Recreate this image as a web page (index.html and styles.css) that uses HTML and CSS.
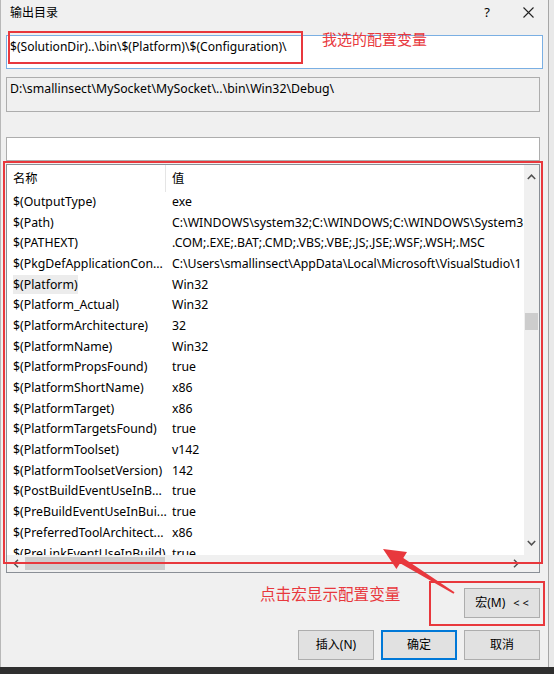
FILE: index.html
```html
<!DOCTYPE html>
<html lang="zh-CN">
<head>
<meta charset="utf-8">
<title>输出目录</title>
<link rel="stylesheet" href="styles.css">
</head>
<body>
<div class="screen">
  <div class="window-row">
    <div class="dialog">
      <div class="titlebar">
        <span class="title">输出目录</span>
        <span class="help">?</span>
        <svg class="close" width="11" height="11" viewBox="0 0 11 11"><path d="M0.5 0.5L10.5 10.5M10.5 0.5L0.5 10.5" stroke="#222" stroke-width="1.1" fill="none"/></svg>
      </div>
      <div class="body">
        <div class="field field-edit">$(SolutionDir)..\bin\$(Platform)\$(Configuration)\</div>
        <div class="field field-readonly">D:\smallinsect\MySocket\MySocket\..\bin\Win32\Debug\</div>
        <div class="field field-filter"></div>
        <div class="listview">
          <div class="list-main">
            <div class="list-header">
              <div class="hcell hname">名称</div>
              <div class="hcell hval">值</div>
            </div>
            <div class="list-rows">
              <div class="row"><div class="cell name">$(OutputType)</div><div class="cell val">exe</div></div>
              <div class="row"><div class="cell name">$(Path)</div><div class="cell val">C:\WINDOWS\system32;C:\WINDOWS;C:\WINDOWS\System3</div></div>
              <div class="row"><div class="cell name">$(PATHEXT)</div><div class="cell val">.COM;.EXE;.BAT;.CMD;.VBS;.VBE;.JS;.JSE;.WSF;.WSH;.MSC</div></div>
              <div class="row"><div class="cell name">$(PkgDefApplicationCon...</div><div class="cell val val-tight">C:\Users\smallinsect\AppData\Local\Microsoft\VisualStudio\1</div></div>
              <div class="row"><div class="cell name"><span class="hot">$(Platform)</span></div><div class="cell val">Win32</div></div>
              <div class="row"><div class="cell name">$(Platform_Actual)</div><div class="cell val">Win32</div></div>
              <div class="row"><div class="cell name">$(PlatformArchitecture)</div><div class="cell val">32</div></div>
              <div class="row"><div class="cell name">$(PlatformName)</div><div class="cell val">Win32</div></div>
              <div class="row"><div class="cell name">$(PlatformPropsFound)</div><div class="cell val">true</div></div>
              <div class="row"><div class="cell name">$(PlatformShortName)</div><div class="cell val">x86</div></div>
              <div class="row"><div class="cell name">$(PlatformTarget)</div><div class="cell val">x86</div></div>
              <div class="row"><div class="cell name">$(PlatformTargetsFound)</div><div class="cell val">true</div></div>
              <div class="row"><div class="cell name">$(PlatformToolset)</div><div class="cell val">v142</div></div>
              <div class="row"><div class="cell name">$(PlatformToolsetVersion)</div><div class="cell val">142</div></div>
              <div class="row"><div class="cell name">$(PostBuildEventUseInB...</div><div class="cell val">true</div></div>
              <div class="row"><div class="cell name">$(PreBuildEventUseInBui...</div><div class="cell val">true</div></div>
              <div class="row"><div class="cell name">$(PreferredToolArchitect...</div><div class="cell val">x86</div></div>
              <div class="row"><div class="cell name">$(PreLinkEventUseInBuild)</div><div class="cell val">true</div></div>
            </div>
          </div>
          <div class="vscroll">
            <div class="sb-btn sb-up"><svg width="9" height="6" viewBox="0 0 9 6"><path d="M0.8 5L4.5 1.2L8.2 5" stroke="#505050" stroke-width="1.5" fill="none"/></svg></div>
            <div class="sb-track"><div class="thumb-v"></div></div>
            <div class="sb-btn sb-down"><svg width="9" height="6" viewBox="0 0 9 6"><path d="M0.8 1L4.5 4.8L8.2 1" stroke="#505050" stroke-width="1.5" fill="none"/></svg></div>
          </div>
          <div class="hscroll">
            <div class="sb-btn sb-left"><svg width="6" height="9" viewBox="0 0 6 9"><path d="M5 0.8L1.2 4.5L5 8.2" stroke="#505050" stroke-width="1.5" fill="none"/></svg></div>
            <div class="sb-htrack"><div class="thumb-h"></div></div>
            <div class="sb-btn sb-right"><svg width="6" height="9" viewBox="0 0 6 9"><path d="M1 0.8L4.8 4.5L1 8.2" stroke="#505050" stroke-width="1.5" fill="none"/></svg></div>
          </div>
          <div class="corner"></div>
        </div>
        <div class="actions">
          <button class="btn btn-macro">宏(M)<span class="chev">&lt; &lt;</span></button>
          <div class="btn-row">
            <button class="btn">插入(N)</button>
            <button class="btn btn-default">确定</button>
            <button class="btn">取消</button>
          </div>
        </div>
      </div>
    </div>
    <div class="side"></div>
  </div>
  <div class="taskbar"></div>

  <div class="mark mark-input"></div>
  <div class="mark mark-list"></div>
  <div class="mark mark-macro"></div>
  <div class="note note-input">我选的配置变量</div>
  <div class="note note-macro">点击宏显示配置变量</div>
  <svg class="arrow" width="554" height="674" viewBox="0 0 554 674">
    <polygon points="383,549 407,552 403.3,558 454.5,592.2 453.5,593.8 400.1,563.2 396.4,569" fill="#e8383d"/>
  </svg>
</div>
</body>
</html>
```

FILE: styles.css
```css
* { box-sizing: border-box; }

html, body {
  margin: 0;
  padding: 0;
}

body {
  width: 554px;
  height: 674px;
  overflow: hidden;
  background: #2f2f2f;
  font-family: "Noto Sans", "Noto Sans CJK SC", sans-serif;
  font-size: 12px;
  color: #000;
}

.screen {
  position: relative;
  width: 554px;
  height: 674px;
  display: flex;
  flex-direction: column;
}

.window-row {
  display: flex;
  height: 667px;
}

.dialog {
  width: 549px;
  height: 667px;
  background: #f0f0f0;
  border-left: 1px solid #b8b8b8;
  border-right: 1px solid #a6a6a6;
  display: flex;
  flex-direction: column;
}

.side {
  flex: 1;
  background: #e9e9e9;
}

.taskbar {
  height: 7px;
  background: #2f2f2f;
}

/* title bar */
.titlebar {
  height: 25px;
  display: flex;
  align-items: center;
  padding: 0 14px 0 9px;
}

.title {
  font-size: 12px;
  line-height: 1;
}

.help {
  margin-left: auto;
  font-size: 13px;
  line-height: 1;
  margin-right: 33px;
}

.close {
  display: block;
}

/* body */
.body {
  padding: 10px 0 0 5px;
  display: flex;
  flex-direction: column;
}

.field {
  white-space: nowrap;
  line-height: 16px;
  font-size: 12.1px;
}

.field-edit {
  width: 537px;
  height: 34px;
  border: 1px solid #7aafe3;
  background: #fff;
  padding: 3px 3px;
}

.field-readonly {
  margin-top: 8px;
  width: 534px;
  height: 35px;
  border: 1px solid #adadad;
  background: #f0f0f0;
  padding: 3px 3px;
  font-size: 12.3px;
}

.field-filter {
  margin-top: 25px;
  width: 534px;
  height: 24px;
  border: 1px solid #adadad;
  background: #fff;
}

/* list view */
.listview {
  margin-top: 3px;
  width: 534px;
  height: 409px;
  border: 1px solid #8a8f96;
  background: #fff;
  display: grid;
  grid-template-columns: 1fr 15px;
  grid-template-rows: 1fr 17px;
  font-size: 12.3px;
}

.list-main {
  overflow: hidden;
  min-width: 0;
  min-height: 0;
}

.list-header {
  height: 26.5px;
  display: flex;
  align-items: stretch;
}

.hcell {
  display: flex;
  align-items: center;
  line-height: 1;
  padding-top: 2px;
}

.hname {
  width: 159px;
  padding-left: 6px;
  border-right: 1px solid #e5e5e5;
}

.hval {
  padding-left: 6px;
}

.row {
  height: 20.7px;
  display: flex;
  align-items: center;
  white-space: nowrap;
}

.cell {
  line-height: 16px;
}

.name {
  width: 165px;
  flex: none;
  padding-left: 6px;
}

.hot {
  background: #ececec;
  padding: 1px 0;
}

.val {
  flex: none;
}

.val-tight {
  letter-spacing: -0.06px;
}

/* scrollbars */
.vscroll {
  background: #f0f0f0;
  display: flex;
  flex-direction: column;
}

.sb-btn {
  display: flex;
  align-items: center;
  justify-content: center;
}

.sb-up, .sb-down {
  height: 24px;
}

.sb-track {
  flex: 1;
}

.thumb-v {
  margin: 124px 1px 0 1px;
  height: 17px;
  background: #cdcdcd;
}

.hscroll {
  background: #f0f0f0;
  display: flex;
  align-items: stretch;
}

.sb-left, .sb-right {
  width: 17px;
}

.sb-htrack {
  flex: 1;
  display: flex;
  align-items: center;
}

.thumb-h {
  margin-left: 1px;
  width: 140px;
  height: 13px;
  background: #cdcdcd;
}

.corner {
  background: #f0f0f0;
}

/* buttons */
.actions {
  margin-top: 15px;
  padding-right: 8px;
  display: flex;
  flex-direction: column;
  align-items: flex-end;
}

.btn-row {
  margin-top: 12px;
  display: flex;
  gap: 7px;
}

.btn {
  width: 76px;
  height: 30px;
  margin: 0;
  padding: 0;
  border: 1px solid #adadad;
  background: #e1e1e1;
  font-family: "Noto Sans", "Noto Sans CJK SC", sans-serif;
  font-size: 12px;
  color: #000;
  line-height: 1;
}

.btn-default {
  border: 2px solid #0078d7;
}

.chev {
  margin-left: 8px;
  font-size: 11px;
}

/* annotations */
.mark {
  position: absolute;
  border: 2px solid #e8383d;
}

.mark-input {
  left: 8px;
  top: 31px;
  width: 295px;
  height: 33px;
}

.mark-list {
  left: 3px;
  top: 161px;
  width: 540px;
  height: 403px;
}

.mark-macro {
  left: 429px;
  top: 581px;
  width: 116px;
  height: 45px;
}

.note {
  position: absolute;
  color: #e8383d;
  font-family: "Noto Sans CJK SC", sans-serif;
  line-height: 1;
  white-space: nowrap;
}

.note-input {
  left: 322px;
  top: 31px;
  font-size: 15px;
}

.note-macro {
  left: 260px;
  top: 586px;
  font-size: 15.6px;
}

.arrow {
  position: absolute;
  left: 0;
  top: 0;
  pointer-events: none;
}
```
